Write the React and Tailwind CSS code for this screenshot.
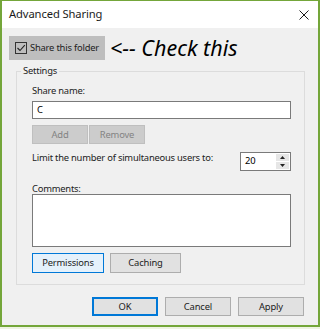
import React from 'react'

const btn = 'flex items-center justify-center border text-[9.4px] tracking-[-0.15px] leading-none'

function Button({ children, className = '' }) {
    return <div className={`${btn} ${className}`}>{children}</div>
}

export default function App() {
    return (
        <div className="w-[320px] h-[329px] bg-[#eef4e2] font-['Noto_Sans',sans-serif] text-black">
            <div className="h-[327px] flex flex-col bg-[#f0f0f0] border-x-2 border-t border-b-2 border-[#74a63a]">
                {/* title bar */}
                <div className="h-[27px] shrink-0 bg-white flex items-center justify-between pl-[7px] pr-[9px]">
                    <span className="text-[11.2px] tracking-[-0.1px] text-[#1b1b1b]">Advanced Sharing</span>
                    <svg width="10" height="10" viewBox="0 0 10 10">
                        <path d="M0.5 0.5L9.5 9.5M9.5 0.5L0.5 9.5" stroke="#1b1b1b" strokeWidth="1" />
                    </svg>
                </div>

                {/* share checkbox */}
                <div className="flex items-center mt-[8px] ml-[7px]">
                    <div className="w-[96px] h-[24px] bg-[#bebebe] flex items-center pl-[6px] gap-[3px]">
                        <div className="w-[12px] h-[12px] border border-[#333] flex items-center justify-center">
                            <svg width="10" height="10" viewBox="0 0 10 10">
                                <path d="M1.5 5L4 7.5L8.8 2.2" stroke="#222" strokeWidth="1.1" fill="none" />
                            </svg>
                        </div>
                        <span className="text-[9.4px] tracking-[-0.2px] text-[#222]">Share this folder</span>
                    </div>
                    <span className="ml-[5px] text-[21.5px] italic leading-none text-black">&lt;-- Check this</span>
                </div>

                {/* settings group */}
                <fieldset className="mt-[4px] ml-[14px] w-[289px] border border-[#dcdcdc]">
                    <legend className="ml-[4px] px-[2px] text-[9.4px] tracking-[-0.2px] leading-[14px] text-[#222]">Settings</legend>
                    <div className="pl-[15px] pr-[13px] pb-[11px] flex flex-col text-[9.4px] tracking-[-0.22px] text-[#222]">
                        <div className="leading-[16px] mt-[5px]">Share name:</div>
                        <div className="mt-[2px] h-[18px] bg-white border border-[#7a7a7a] flex items-center pl-[4px] text-black">C</div>
                        <div className="mt-[6px] flex gap-[1px]">
                            <Button className="w-[56px] h-[19px] bg-[#cccccc] border-[#bfbfbf] text-[#838383]">Add</Button>
                            <Button className="w-[56px] h-[19px] bg-[#cccccc] border-[#bfbfbf] text-[#838383]">Remove</Button>
                        </div>
                        <div className="mt-[6px] flex items-start justify-between">
                            <span className="leading-[16px]">Limit the number of simultaneous users to:</span>
                            <div className="mt-[2px] w-[51px] h-[19px] bg-white border border-[#7a7a7a] flex">
                                <div className="flex-1 flex items-center pl-[4px] text-black">20</div>
                                <div className="w-[15px] flex flex-col p-[1px] gap-[1px]">
                                    <div className="flex-1 bg-[#e6e6e6] flex items-center justify-center">
                                        <svg width="5" height="3" viewBox="0 0 5 3"><path d="M0 3L2.5 0L5 3Z" fill="#222" /></svg>
                                    </div>
                                    <div className="flex-1 bg-[#e6e6e6] flex items-center justify-center">
                                        <svg width="5" height="3" viewBox="0 0 5 3"><path d="M0 0L2.5 3L5 0Z" fill="#222" /></svg>
                                    </div>
                                </div>
                            </div>
                        </div>
                        <div className="leading-[16px] mt-[10px]">Comments:</div>
                        <div className="mt-[-3px] h-[53px] bg-white border border-[#7a7a7a]"></div>
                        <div className="mt-[6px] flex gap-[6px]">
                            <Button className="w-[72px] h-[20px] bg-[#e5f1fb] border-[#0078d7] text-[#222]">Permissions</Button>
                            <Button className="w-[71px] h-[20px] bg-[#e1e1e1] border-[#adadad] text-[#222]">Caching</Button>
                        </div>
                    </div>
                </fieldset>

                {/* dialog buttons */}
                <div className="mt-[12px] flex justify-end gap-[7px] pr-[14px]">
                    <Button className="w-[66px] h-[19px] bg-[#e1e1e1] border-2 border-[#0078d7] text-[#222]">OK</Button>
                    <Button className="w-[66px] h-[19px] bg-[#e1e1e1] border-[#adadad] text-[#222]">Cancel</Button>
                    <Button className="w-[66px] h-[19px] bg-[#e1e1e1] border-[#adadad] text-[#222]">Apply</Button>
                </div>
                <div className="flex-1" />
            </div>
        </div>
    )
}
